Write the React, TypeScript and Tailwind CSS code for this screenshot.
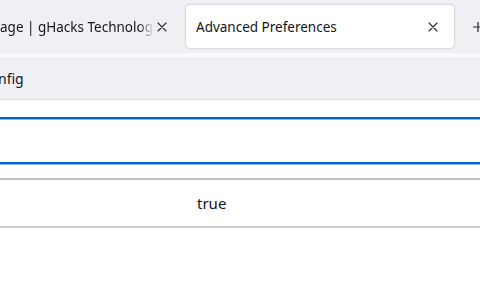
const font = { fontFamily: '"Noto Sans", "Open Sans", sans-serif' };

function CloseIcon({ className = '' }: { className?: string }) {
  return (
    <svg width="10" height="10" viewBox="0 0 10 10" className={className}>
      <path d="M1 1L9 9M9 1L1 9" stroke="#2b2a33" strokeWidth="1.1" strokeLinecap="round" />
    </svg>
  );
}

export default function App() {
  return (
    <main className="h-[300px] w-[480px] overflow-hidden bg-white text-[#15141a]" style={font}>
      {/* tab strip */}
      <div className="flex h-[53px] items-start bg-[#f0f0f4] pt-[5px]">
        <div className="flex h-[43px] w-[186px] shrink-0 items-center">
          <div
            className="w-[154px] overflow-hidden whitespace-nowrap pt-[2px] text-[13.5px]"
            style={{ maskImage: 'linear-gradient(to right, black 90%, transparent)' }}
          >
            age | gHacks Technology News
          </div>
          <CloseIcon className="ml-[3px] shrink-0" />
        </div>
        <div className="flex h-[43px] w-[268px] shrink-0 items-center rounded-[4px] bg-white pl-[10px] pr-[16px] shadow-[0_0_2px_rgba(0,0,0,0.35)]">
          <span className="flex-1 pt-[2px] text-[13.5px]">Advanced Preferences</span>
          <CloseIcon />
        </div>
        <div className="ml-[18px] flex h-[43px] shrink-0 items-center">
          <svg width="12" height="12" viewBox="0 0 12 12">
            <path d="M6 1V11M1 6H11" stroke="#2b2a33" strokeWidth="1.2" />
          </svg>
        </div>
      </div>

      {/* toolbar */}
      <div className="flex h-[47px] items-center border-t-[4px] border-b border-t-[#f9f9fb] border-b-[#dcdce2] bg-[#f0f0f4] text-[14px]">
        <span className="-ml-[2px]">nfig</span>
      </div>

      {/* content */}
      <div className="pt-[17px]">
        <div className="-mx-2 h-[47px] border-y-2 border-[#0061e0] shadow-[inset_0_1px_0_#8db7f2,0_1px_0_#8db7f2]" />
        <div className="mt-[14px] flex h-[50px] items-center border-y-2 border-t-[#bdbdc2] border-b-[#cfcfd4] pl-[197px] text-[15px]">
          true
        </div>
      </div>
    </main>
  );
}
